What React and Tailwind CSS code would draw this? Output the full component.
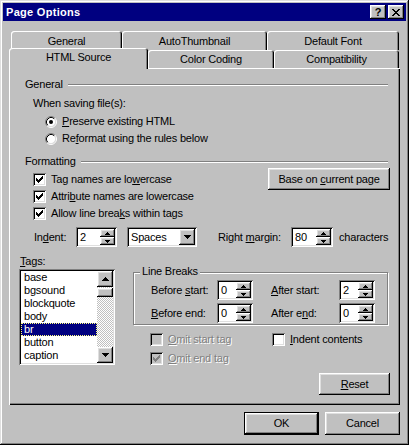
// Page Options dialog, classic Win9x look. Everything is flow-laid with
// fixed pixel sizes; bevels are inset box-shadows.

const raised =
  'shadow-[inset_-1px_-1px_#000,inset_1px_1px_#fff,inset_-2px_-2px_#808080,inset_2px_2px_#dfdfdf]';
const sunken =
  'shadow-[inset_1px_1px_#808080,inset_-1px_-1px_#fff,inset_2px_2px_#000,inset_-2px_-2px_#dfdfdf]';
const tabEdge = 'shadow-[inset_1px_1px_#fff,inset_-1px_0_#000,inset_-2px_0_#808080]';
const dim = 'text-[#808080] [text-shadow:1px_1px_0_#fff]';

function Check({ on, dis }) {
  return (
    <div className={`h-[13px] w-[13px] shrink-0 ${dis ? 'bg-[#c0c0c0]' : 'bg-white'} ${sunken}`}>
      {on && (
        <svg width="13" height="13" shapeRendering="crispEdges">
          <path
            fill={dis ? '#808080' : '#000'}
            d="M3 5h1v3h-1zM4 6h1v3h-1zM5 7h1v3h-1zM6 6h1v3h-1zM7 5h1v3h-1zM8 4h1v3h-1zM9 3h1v3h-1z"
          />
        </svg>
      )}
    </div>
  );
}

function Radio({ on }) {
  return (
    <svg width="12" height="12" viewBox="0 0 12 12" className="shrink-0">
      <circle cx="6" cy="6" r="4.5" fill="#fff" />
      <path d="M2.11 9.89A5.5 5.5 0 0 1 9.89 2.11" stroke="#808080" fill="none" />
      <path d="M9.89 2.11A5.5 5.5 0 0 1 2.11 9.89" stroke="#fff" fill="none" />
      <path d="M2.82 9.18A4.5 4.5 0 0 1 9.18 2.82" stroke="#000" fill="none" />
      <path d="M9.18 2.82A4.5 4.5 0 0 1 2.82 9.18" stroke="#dfdfdf" fill="none" />
      {on && <circle cx="6" cy="6" r="2" fill="#000" />}
    </svg>
  );
}

function Arrow({ down }) {
  return (
    <svg width="7" height="4" shapeRendering="crispEdges">
      <path
        fill="#000"
        d={down ? 'M0 0h7v1h-7zM1 1h5v1h-5zM2 2h3v1h-3zM3 3h1v1h-1z' : 'M3 0h1v1h-1zM2 1h3v1h-3zM1 2h5v1h-5zM0 3h7v1h-7z'}
      />
    </svg>
  );
}

function SpinBtn({ down }) {
  return (
    <div className={`flex h-[8px] items-center justify-center bg-[#c0c0c0] ${raised}`}>
      <svg width="5" height="3" shapeRendering="crispEdges">
        <path fill="#000" d={down ? 'M0 0h5v1h-5zM1 1h3v1h-3zM2 2h1v1h-1z' : 'M2 0h1v1h-1zM1 1h3v1h-3zM0 2h5v1h-5z'} />
      </svg>
    </div>
  );
}

function Spin({ v, w }) {
  return (
    <div className={`flex h-[20px] shrink-0 bg-white p-[2px] ${w} ${sunken}`}>
      <span className="flex-1 pl-[2px] leading-[16px]">{v}</span>
      <div className="flex w-[15px] flex-col">
        <SpinBtn />
        <SpinBtn down />
      </div>
    </div>
  );
}

function Heading({ children }) {
  return (
    <div className="flex pl-[16px] pr-[12px]">
      <span>{children}</span>
      <div className="ml-[5px] mt-[6px] h-[2px] flex-1 border-t border-b border-t-[#808080] border-b-white" />
    </div>
  );
}

function Row({ children, className = '' }) {
  return <div className={`flex h-[13px] items-center gap-[5px] ${className}`}>{children}</div>;
}

const tags = ['base', 'bgsound', 'blockquote', 'body', 'br', 'button', 'caption'];

export default function App() {
  return (
    <div
      className={`h-[445px] w-[409px] bg-[#c0c0c0] p-[3px] font-['Liberation_Sans',Arial,sans-serif] text-[11px] leading-[13px] tracking-[-0.2px] text-black shadow-[inset_-1px_-1px_#000,inset_1px_1px_#dfdfdf,inset_-2px_-2px_#808080,inset_2px_2px_#fff]`}
    >
      {/* Title bar */}
      <div className="flex h-[18px] items-center bg-[#000080] pl-[3px] pr-[2px]">
        <span className="flex-1 font-bold tracking-[0.3px] text-white">Page Options</span>
        <div className="flex gap-[2px]">
          <div className={`flex h-[14px] w-[16px] items-center justify-center bg-[#c0c0c0] text-[11px] font-bold leading-none ${raised}`}>
            ?
          </div>
          <div className={`flex h-[14px] w-[16px] items-center justify-center bg-[#c0c0c0] ${raised}`}>
            <svg width="8" height="7" shapeRendering="crispEdges">
              <path
                fill="#000"
                d="M0 0h2v1h-2zM6 0h2v1h-2zM1 1h2v1h-2zM5 1h2v1h-2zM2 2h4v1h-4zM3 3h2v1h-2zM2 4h4v1h-4zM1 5h2v1h-2zM5 5h2v1h-2zM0 6h2v1h-2zM6 6h2v1h-2z"
              />
            </svg>
          </div>
        </div>
      </div>

      <div className="px-[6px]">
        {/* Tabs, back row */}
        <div className="mt-[10px] flex pl-[2px]">
          {[
            ['General', 'w-[111px]'],
            ['AutoThumbnail', 'w-[145px]'],
            ['Default Font', 'w-[132px]'],
          ].map(([t, w]) => (
            <div key={t} className={`h-[19px] rounded-t-[3px] bg-[#c0c0c0] pt-[4px] text-center ${w} ${tabEdge}`}>
              {t}
            </div>
          ))}
        </div>
        {/* Tabs, front row */}
        <div className="-mt-[2px] flex h-[21px] items-end">
          <div className={`relative z-10 h-[21px] w-[139px] rounded-t-[3px] bg-[#c0c0c0] pt-[3px] text-center ${tabEdge}`}>
            HTML Source
          </div>
          <div className={`mb-[1px] h-[18px] w-[126px] rounded-t-[3px] bg-[#c0c0c0] pt-[3px] text-center ${tabEdge}`}>
            Color Coding
          </div>
          <div className={`mb-[1px] h-[18px] w-[125px] rounded-t-[3px] bg-[#c0c0c0] pt-[3px] text-center ${tabEdge}`}>
            Compatibility
          </div>
        </div>

        {/* Panel */}
        <div className="-mt-px h-[337px] bg-[#c0c0c0] pt-[10px] shadow-[inset_1px_1px_#fff,inset_-1px_-1px_#000,inset_-2px_-2px_#808080]">
          <Heading>General</Heading>
          <div className="mt-[6px] pl-[24px]">When saving file(s):</div>
          <Row className="mt-[5px] gap-[4px] pl-[36px]">
            <Radio on />
            <span>
              <u>P</u>reserve existing HTML
            </span>
          </Row>
          <Row className="mt-[4px] gap-[4px] pl-[36px]">
            <Radio />
            <span>
              Re<u>f</u>ormat using the rules below
            </span>
          </Row>

          <div className="mt-[10px]">
            <Heading>Formatting</Heading>
          </div>
          <div className="flex pr-[10px]">
            <div className="flex flex-col gap-[4px] pl-[24px] pt-[5px]">
              <Row>
                <Check on />
                <span>
                  Tag names are lo<u>w</u>ercase
                </span>
              </Row>
              <Row>
                <Check on />
                <span>
                  Attri<u>b</u>ute names are lowercase
                </span>
              </Row>
              <Row>
                <Check on />
                <span>
                  Allow line brea<u>k</u>s within tags
                </span>
              </Row>
            </div>
            <button type="button" className={`ml-auto h-[22px] w-[122px] bg-[#c0c0c0] ${raised}`}>
              Base on <u>c</u>urrent page
            </button>
          </div>

          {/* Indent row */}
          <div className="mt-[7px] flex h-[20px] items-center pl-[25px]">
            <span className="w-[42px]">
              In<u>d</u>ent:
            </span>
            <Spin v="2" w="w-[41px]" />
            <div className={`ml-[10px] flex h-[20px] w-[70px] bg-white p-[2px] ${sunken}`}>
              <span className="flex-1 pl-[2px] leading-[16px]">Spaces</span>
              <div className={`flex h-[16px] w-[16px] items-center justify-center bg-[#c0c0c0] ${raised}`}>
                <Arrow down />
              </div>
            </div>
            <span className="ml-[21px] w-[73px]">
              Right <u>m</u>argin:
            </span>
            <Spin v="80" w="w-[42px]" />
            <span className="ml-[6px]">characters</span>
          </div>

          {/* Tags + line breaks */}
          <div className="mt-[8px] flex pl-[10px]">
            <div className="flex flex-col">
              <div className="pl-[1px]">
                <u>T</u>ags:
              </div>
              <div className={`mt-[1px] flex h-[96px] w-[96px] bg-white p-[2px] ${sunken}`}>
                <div className="flex w-[76px] flex-col">
                  {tags.map((t) =>
                    t === 'br' ? (
                      <div
                        key={t}
                        className="h-[13px] bg-[#000080] pl-[3px] leading-[13px] text-white outline-1 -outline-offset-1 outline-dotted outline-[#ffff7f]"
                      >
                        {t}
                      </div>
                    ) : (
                      <div key={t} className="h-[13px] pl-[3px] leading-[13px]">
                        {t}
                      </div>
                    ),
                  )}
                </div>
                <div className="flex w-[16px] flex-col">
                  <div className={`flex h-[16px] items-center justify-center bg-[#c0c0c0] ${raised}`}>
                    <Arrow />
                  </div>
                  <div className="flex-1 bg-[image:repeating-conic-gradient(#fff_0%_25%,#c0c0c0_0%_50%)] bg-[length:2px_2px]">
                    <div className={`mt-[1px] h-[9px] bg-[#c0c0c0] ${raised}`} />
                  </div>
                  <div className={`flex h-[16px] items-center justify-center bg-[#c0c0c0] ${raised}`}>
                    <Arrow down />
                  </div>
                </div>
              </div>
            </div>

            <div className="ml-[18px] mt-[17px] flex w-[257px] flex-col">
              <div className="flex h-[53px] w-[255px] flex-col border border-[#808080] shadow-[1px_1px_#fff,inset_1px_1px_#fff]">
                <div className="-mt-[8px] ml-[6px] w-fit bg-[#c0c0c0] px-[2px]">Line Breaks</div>
                <div className="mt-[2px] flex h-[20px] items-center pl-[17px]">
                  <span className="w-[66px] pt-[1px]">
                    Before <u>s</u>tart:
                  </span>
                  <Spin v="0" w="w-[36px]" />
                  <span className="ml-[18px] w-[68px] pt-[1px]">
                    <u>A</u>fter start:
                  </span>
                  <Spin v="2" w="w-[36px]" />
                </div>
                <div className="mt-[3px] flex h-[20px] items-center pl-[17px]">
                  <span className="w-[66px] pt-[1px]">
                    <u>B</u>efore end:
                  </span>
                  <Spin v="0" w="w-[36px]" />
                  <span className="ml-[18px] w-[68px] pt-[1px]">
                    After e<u>n</u>d:
                  </span>
                  <Spin v="0" w="w-[36px]" />
                </div>
              </div>

              <div className="mt-[8px] flex pl-[17px]">
                <Row className="w-[122px]">
                  <Check dis />
                  <span className={dim}>
                    <u>O</u>mit start tag
                  </span>
                </Row>
                <Row>
                  <Check />
                  <span>
                    <u>I</u>ndent contents
                  </span>
                </Row>
              </div>
              <Row className="mt-[6px] pl-[17px]">
                <Check on dis />
                <span className={dim}>
                  <u>O</u>mit end tag
                </span>
              </Row>

              <button type="button" className={`mt-[8px] h-[22px] w-[71px] self-end bg-[#c0c0c0] ${raised}`}>
                <u>R</u>eset
              </button>
            </div>
          </div>
        </div>

        {/* Dialog buttons */}
        <div className="mt-[7px] flex justify-end gap-[6px]">
          <button type="button" className={`h-[23px] w-[75px] border border-black bg-[#c0c0c0] ${raised}`}>
            OK
          </button>
          <button type="button" className={`h-[23px] w-[75px] bg-[#c0c0c0] ${raised}`}>
            Cancel
          </button>
        </div>
      </div>
    </div>
  );
}
